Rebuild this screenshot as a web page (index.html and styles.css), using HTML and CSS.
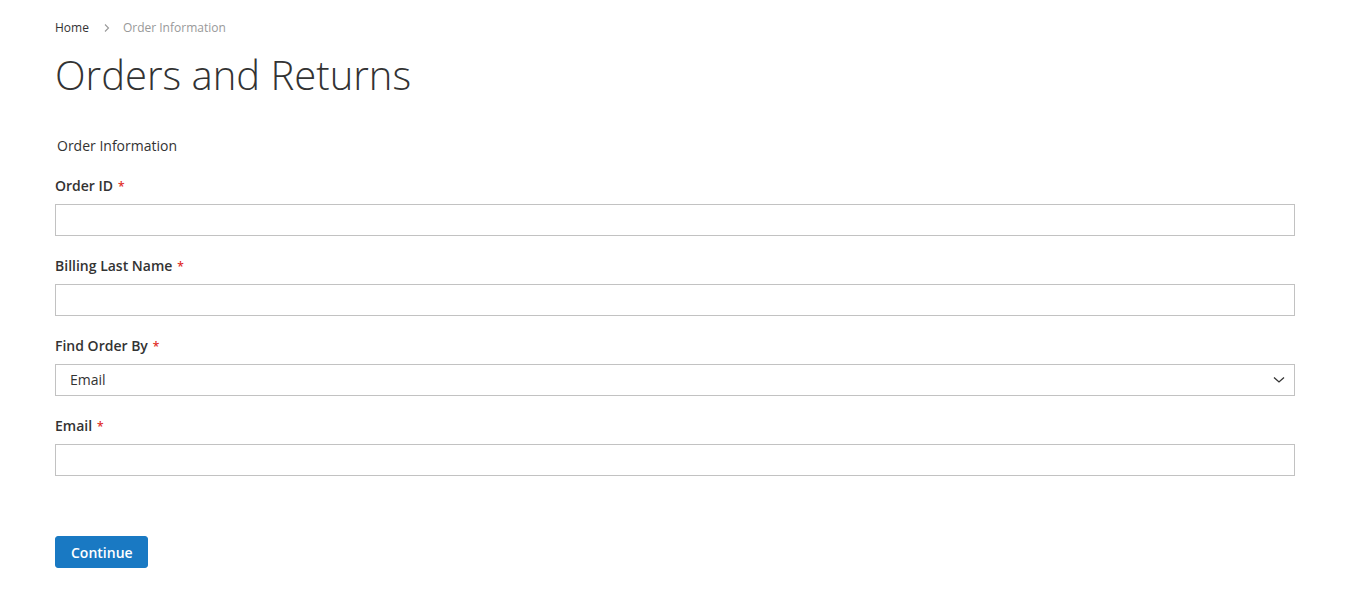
FILE: index.html
```html
<!DOCTYPE html>
<html>
<head>
    <meta charset="UTF-8">
    <meta name="viewport" content="width=device-width, initial-scale=1.0">
    <title>Orders and Returns</title>
    <link rel="stylesheet" href="styles.css">
</head>
<body>
    <div class="page">
        <div class="breadcrumbs">
            <a href="#">Home</a>
            <span class="sep">
                <svg width="8" height="10" viewBox="0 0 8 10"><path d="M2 1.5 L5.5 5 L2 8.5" fill="none" stroke="#999" stroke-width="1.1"/></svg>
            </span>
            <span class="current">Order Information</span>
        </div>

        <h1 class="page-title">Orders and Returns</h1>

        <form class="form-orders">
            <div class="legend">Order Information</div>

            <div class="field">
                <label class="label">Order ID<span class="req">*</span></label>
                <input class="input-text" type="text">
            </div>

            <div class="field">
                <label class="label">Billing Last Name<span class="req">*</span></label>
                <input class="input-text" type="text">
            </div>

            <div class="field">
                <label class="label">Find Order By<span class="req">*</span></label>
                <div class="select-wrap">
                    <span class="select-value">Email</span>
                    <svg class="chevron" width="12" height="8" viewBox="0 0 12 8"><path d="M1 1.5 L6 6 L11 1.5" fill="none" stroke="#333" stroke-width="1.3"/></svg>
                </div>
            </div>

            <div class="field">
                <label class="label">Email<span class="req">*</span></label>
                <input class="input-text" type="text">
            </div>

            <div class="actions">
                <button type="button" class="btn-primary">Continue</button>
            </div>
        </form>
    </div>
</body>
</html>
```

FILE: styles.css
```css
body {
    margin: 0;
    padding: 0;
    background-color: #fff;
    font-family: "Open Sans", "Liberation Sans", Arial, sans-serif;
    color: #333;
}
.page {
    padding: 19px 55px 0 55px;
}
.breadcrumbs {
    display: flex;
    align-items: center;
    font-size: 12px;
    line-height: 18px;
    height: 18px;
}
.breadcrumbs a {
    color: #333;
    text-decoration: none;
}
.breadcrumbs .sep {
    display: flex;
    align-items: center;
    margin: 0 12px 0 14px;
}
.breadcrumbs .current {
    color: #999;
}
.page-title {
    margin: 13px 0 0 0;
    font-size: 40px;
    font-weight: 300;
    line-height: 50px;
    color: #333;
}
.form-orders {
    margin-top: 37px;
}
.legend {
    font-size: 14px;
    line-height: 18px;
    margin: 0 0 22px 2px;
}
.field {
    margin-bottom: 21px;
}
.label {
    display: block;
    font-size: 14px;
    font-weight: 600;
    line-height: 18px;
    height: 18px;
    margin-bottom: 9px;
}
.req {
    color: #e02b27;
    font-size: 12px;
    line-height: 12px;
    margin-left: 5px;
}
.input-text,
.select-wrap {
    display: block;
    box-sizing: border-box;
    width: 100%;
    height: 32px;
    border: 1px solid #c2c2c2;
    background: #fff;
    margin: 0;
    padding: 0 9px;
    font-family: inherit;
    font-size: 14px;
}
.select-wrap {
    display: flex;
    align-items: center;
    justify-content: space-between;
    padding: 0 9px 0 14px;
}
.select-value {
    font-size: 14px;
    line-height: 18px;
}
.actions {
    padding-top: 39px;
}
.btn-primary {
    background: #1979c3;
    border: 1px solid #1979c3;
    color: #fff;
    font-family: inherit;
    font-size: 14px;
    font-weight: 600;
    height: 32px;
    padding: 0 14px 0 15px;
    border-radius: 3px;
    cursor: pointer;
}
```
